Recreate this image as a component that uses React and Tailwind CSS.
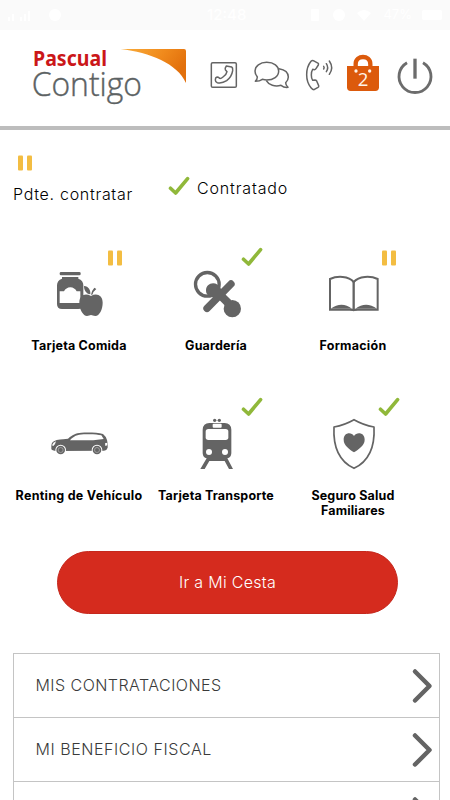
import React from 'react';

const GRAY = '#646464';

function PauseMark({ className }) {
  return (
    <svg className={className} width="16" height="18" viewBox="0 0 16 18">
      <rect x="1" y="1.5" width="5" height="15" rx="1" fill="#f3bd42" />
      <rect x="10" y="1.5" width="5" height="15" rx="1" fill="#f3bd42" />
    </svg>
  );
}

function CheckMark({ className }) {
  return (
    <svg className={className} width="22" height="20" viewBox="0 0 22 20">
      <path d="M2.5 12.2 L7.6 17 L19.6 2.6" fill="none" stroke="#90b83a" strokeWidth="3.6" strokeLinejoin="round" strokeLinecap="round" />
    </svg>
  );
}

function Logo() {
  return (
    <svg width="160" height="76" viewBox="90 105 480 228">
      <defs>
        <linearGradient id="swoosh" x1="0" y1="0" x2="1" y2="0.4">
          <stop offset="0" stopColor="#f9ad3c" />
          <stop offset="0.6" stopColor="#f08a1c" />
          <stop offset="1" stopColor="#e2700c" />
        </linearGradient>
      </defs>
      <text x="99" y="198" textLength="222" lengthAdjust="spacingAndGlyphs" fontFamily="'Noto Sans', sans-serif" fontWeight="700" fontSize="65" fill="#cb1719">Pascual</text>
      <text x="95" y="288" textLength="331" lengthAdjust="spacingAndGlyphs" fontFamily="'Open Sans', 'Noto Sans', sans-serif" fontWeight="300" fontSize="97" fill="#5c6263" stroke="#5c6263" strokeWidth="1.2">Contigo</text>
      <path d="M362 147 H552 Q558 147 558 153 V249 C532 190 450 158 362 147 Z" fill="url(#swoosh)" />
    </svg>
  );
}

function HeaderIcons() {
  return (
    <div className="flex gap-2.5">
      <svg width="30" height="50" viewBox="30 150 90 150" fill="none" stroke={GRAY} strokeWidth="4.5" strokeLinejoin="round">
        <rect x="34" y="188" width="75" height="74" rx="4" />
        <path d="M79 198 L95 201 Q99 203 98 212 Q95 231 80 242 Q66 251 52 248 Q46 246 46 240 L47 234 Q49 231 54 231 L59 235 Q63 236 69 231 Q80 223 81 215 L76 209 Q74 205 79 198 Z" />
      </svg>
      <svg width="42" height="50" viewBox="150 150 126 150" fill="none" stroke={GRAY} strokeWidth="4.5" strokeLinejoin="round">
        <path d="M200 187 C222 187 236 198 236 213 C236 230 220 240 200 240 C195 240 191 239 187 238 C182 242 175 244 166 244 C170 240 172 235 172 231 C168 226 165 220 165 213 C165 198 180 187 200 187 Z" />
        <path d="M237 206 C255 209 265 219 265 231 C265 238 262 243 257 248 C257 253 260 258 264 262 C256 263 248 260 243 256 C225 261 206 255 199 242" />
      </svg>
      <svg width="33" height="50" viewBox="306 150 99 150" fill="none" stroke={GRAY} strokeWidth="4.5" strokeLinejoin="round" strokeLinecap="round">
        <path d="M340 182 L355 190 Q356 192 355 195 L348 206 Q346 209 343 209 L338 208 Q334 214 334 225 Q334 236 338 241 L345 240 Q348 240 350 243 L356 257 Q357 260 354 262 L342 269 Q338 269 333 263 Q320 247 320 224 Q320 200 333 184 Q336 181 340 182 Z" />
        <path d="M371 199 Q374 203 371 207 M379 191 Q387 203 379 215 M388 183 Q402 203 388 223" />
      </svg>
      <svg width="38" height="50" viewBox="435 150 114 150">
        <path d="M467 202 V192 C467 164 511 164 511 192 V202" fill="none" stroke="#dc5a0c" strokeWidth="13" />
        <path d="M441 198 H537 V262 Q537 273 526 273 H452 Q441 273 441 262 Z" fill="#dc5a0c" />
        <circle cx="468" cy="213" r="5" fill="#fff4e8" />
        <circle cx="509" cy="213" r="5" fill="#fff4e8" />
        <text x="489" y="258" textAnchor="middle" fontFamily="'Open Sans', sans-serif" fontSize="56" fill="#fff4e8">2</text>
      </svg>
      <svg width="44" height="50" viewBox="579 150 132 150" fill="none" stroke="#6c6c6c" strokeWidth="8.5">
        <path d="M621 188 A48 48 0 1 0 669 188" />
        <path d="M645 176 V236" strokeWidth="10" />
      </svg>
    </div>
  );
}

function StatusBar() {
  return (
    <div className="flex h-[30px] items-center justify-between bg-[#fafafa] px-2 text-white">
      <svg width="58" height="16" viewBox="0 0 58 16" fill="currentColor">
        <path d="M0 10h2v4H0zM4 7h2v7H4zM12 10h2v4h-2zM16 7h2v7h-2zM20 4h2v10h-2z" />
        <circle cx="47" cy="8" r="6" />
      </svg>
      <span className="pl-[80px] text-[15px] font-medium">12:48</span>
      <div className="flex items-center gap-2.5">
        <svg width="66" height="16" viewBox="0 0 66 16" fill="currentColor">
          <rect x="4" y="2" width="8" height="12" rx="1" />
          <circle cx="32" cy="8" r="6" />
          <path d="M50 6q7-6 14 0l-7 8z" />
        </svg>
        <span className="text-[13px]">47%</span>
        <span className="h-2.5 w-5 rounded-xs bg-white" />
      </div>
    </div>
  );
}

const JarIcon = () => (
  <svg width="64" height="64" viewBox="81 69 192 192" fill={GRAY}>
    <rect x="119" y="96" width="63" height="10" rx="4" />
    <path d="M126 111 H175 V116 Q190 121 190 136 V192 Q190 207 175 207 H126 Q111 207 111 192 V136 Q111 121 126 116 Z" />
    <path d="M119 154 H132 Q138 143 151 142 Q164 143 170 154 H181 V189 H119 Z" fill="#fff" />
    <path d="M213 168 C196 158 178 165 178 188 C178 208 190 228 201 228 C206 228 209 225 213 225 C217 225 220 228 226 228 C238 228 248 208 248 188 C248 165 229 158 213 168 Z" />
    <path d="M211 163 C198 162 192 150 192 138 C206 139 212 150 211 163 Z" />
    <path d="M213 164 Q214 153 223 143 L229 147 Q220 154 217 164 Z" />
  </svg>
);

const PacifierIcon = () => (
  <svg width="64" height="64" viewBox="42 69 192 192" fill={GRAY}>
    <circle cx="112" cy="133" r="35.5" fill="none" stroke={GRAY} strokeWidth="10" />
    <path d="M108 152 C108 134 126 124 143 134 C150 139 153 147 158 155 L184 181 L166 198 L140 172 C124 172 108 168 108 152 Z" />
    <path d="M111 205 L183 132" stroke={GRAY} strokeWidth="22" strokeLinecap="round" />
    <circle cx="187" cy="206" r="26" />
  </svg>
);

const BookIcon = () => (
  <svg width="64" height="64" viewBox="63 69 192 192">
    <path d="M161 126 C146 108 112 107 90 117 V209 H233 V117 C211 107 177 108 161 126 Z" fill="none" stroke={GRAY} strokeWidth="6" />
    <path d="M161 124 V209" stroke={GRAY} strokeWidth="7" />
    <path d="M92 206 Q125 182 156 206 Z M166 206 Q198 182 231 206 Z" fill={GRAY} />
    <path d="M150 208 H172 V211 Q161 216 150 211 Z" fill={GRAY} />
  </svg>
);

const CarIcon = () => (
  <svg width="64" height="64" viewBox="111 69 192 192">
    <path d="M124 168 C124 158 130 153 140 150 C154 147 166 148 174 146 C187 134 197 129 214 128 C240 127 264 128 279 132 Q287 138 291 150 Q294 160 293 173 Q291 181 282 182 L140 183 Q125 182 124 177 Z" fill={GRAY} />
    <path d="M180 151 C190 139 202 134 221 133 C246 132 262 133 274 136 L281 147 L250 151 Z" fill="#fff" />
    <path d="M126 166 Q129 157 138 154 Q137 161 130 168 Z M285 160 L292 158 V166 L286 168 Z" fill="#fff" />
    <circle cx="152" cy="180" r="16" fill="#fff" />
    <circle cx="261" cy="180" r="16" fill="#fff" />
    <circle cx="152" cy="180" r="13" fill={GRAY} />
    <circle cx="261" cy="180" r="13" fill={GRAY} />
    <circle cx="152" cy="180" r="7.5" fill="none" stroke="#b5b5b5" strokeWidth="2" />
    <circle cx="261" cy="180" r="7.5" fill="none" stroke="#b5b5b5" strokeWidth="2" />
  </svg>
);

const TrainIcon = () => (
  <svg width="64" height="64" viewBox="102 69 192 192" fill={GRAY}>
    <circle cx="194" cy="91" r="5" />
    <circle cx="208" cy="91" r="5" />
    <path d="M178 99 H224 Q243 99 244 119 V190 Q243 203 232 205 L249 237 H237 L224 213 H178 L164 237 H151 L170 205 Q159 203 158 190 V119 Q159 99 178 99 Z" />
    <rect x="188" y="101" width="27" height="12" rx="3" fill="#fff" />
    <rect x="167" y="117" width="68" height="33" rx="8" fill="#fff" />
    <circle cx="177" cy="186" r="9" fill="#fff" />
    <circle cx="225" cy="186" r="9" fill="#fff" />
  </svg>
);

const ShieldIcon = () => (
  <svg width="64" height="64" viewBox="93 69 192 192">
    <path d="M192 89 Q164 105 132 111 C129 170 147 214 192 235 C237 214 255 170 252 111 Q220 105 192 89 Z" fill="none" stroke={GRAY} strokeWidth="5" strokeLinejoin="round" />
    <path d="M192 138 C184 125 161 127 161 149 C161 167 178 177 192 187 C206 177 224 167 224 149 C224 127 200 125 192 138 Z" fill={GRAY} />
  </svg>
);

const PRODUCTS = [
  { name: 'Tarjeta Comida', icon: JarIcon, status: 'pending', tracking: 'tracking-[0.2px]' },
  { name: 'Guardería', icon: PacifierIcon, status: 'done', tracking: 'tracking-[0.16px]' },
  { name: 'Formación', icon: BookIcon, status: 'pending', tracking: 'tracking-[0.25px]' },
  { name: 'Renting de Vehículo', icon: CarIcon, status: null, tracking: 'tracking-[0.28px]' },
  { name: 'Tarjeta Transporte', icon: TrainIcon, status: 'done', tracking: 'tracking-[0.16px]' },
  { name: 'Seguro Salud Familiares', icon: ShieldIcon, status: 'done', tracking: 'tracking-[0.16px]' },
];

function Product({ name, icon: Icon, status, tracking }) {
  return (
    <div className="relative flex h-[150px] flex-col items-center pt-4">
      {status === 'pending' && <PauseMark className="absolute top-0.5 left-[96px]" />}
      {status === 'done' && <CheckMark className="absolute top-0 left-[93px]" />}
      <Icon />
      <span className={`mt-[11px] w-[134px] text-center text-[12.5px] leading-[15px] font-bold text-black ${tracking} ${name.startsWith('Seguro') ? 'px-5' : 'whitespace-nowrap'}`}>{name}</span>
    </div>
  );
}

const MENU = [
  { label: 'MIS CONTRATACIONES', tracking: 'tracking-[0.46px]' },
  { label: 'MI BENEFICIO FISCAL', tracking: 'tracking-[0.56px]' },
  { label: '', tracking: '' },
];

export default function App() {
  return (
    <div className="h-[800px] w-[450px] overflow-hidden bg-white font-['Inter',sans-serif]">
      <StatusBar />
      <header className="flex h-[100px] items-start justify-between border-b-4 border-[#bdbdbd] pr-[13px] pl-[30px]">
        <div className="pt-[5px]"><Logo /></div>
        <div className="pt-5"><HeaderIcons /></div>
      </header>

      <div className="flex h-[117px] pt-6 pl-[13px] text-[16px] leading-5 font-light text-black">
        <div className="w-[155px]">
          <PauseMark className="ml-1" />
          <p className="mt-3 tracking-[0.7px]">Pdte. contratar</p>
        </div>
        <div className="flex items-start pt-6">
          <CheckMark className="-mt-0.5" />
          <span className="ml-[7px] tracking-[0.85px]">Contratado</span>
        </div>
      </div>

      <div className="ml-[10.5px] grid w-[411px] grid-cols-3">
        {PRODUCTS.map(p => <Product key={p.name} {...p} />)}
      </div>

      <button className="mt-1 ml-[57px] block h-[63px] w-[341px] rounded-full border border-[#c5281d] bg-[#d52b1e] pb-0.5 text-[16px] font-light tracking-[0.3px] text-white">Ir a Mi Cesta</button>

      <nav className="mt-[39px] ml-[12.5px] w-[427px] border-x border-[#c4c4c4]">
        {MENU.map((item, i) => (
          <div key={i} className="flex h-16 items-center justify-between border-t border-[#c4c4c4] pr-1.5 pl-[22px] text-[16px] font-light text-[#3a3a3a]">
            <span className={`pb-0.5 ${item.tracking}`}>{item.label}</span>
            <svg width="22" height="38" viewBox="0 0 22 38">
              <path d="M4 4.5 L18.5 19 L4 33.5" fill="none" stroke={GRAY} strokeWidth="4.5" strokeLinecap="round" strokeLinejoin="round" />
            </svg>
          </div>
        ))}
      </nav>
    </div>
  );
}
